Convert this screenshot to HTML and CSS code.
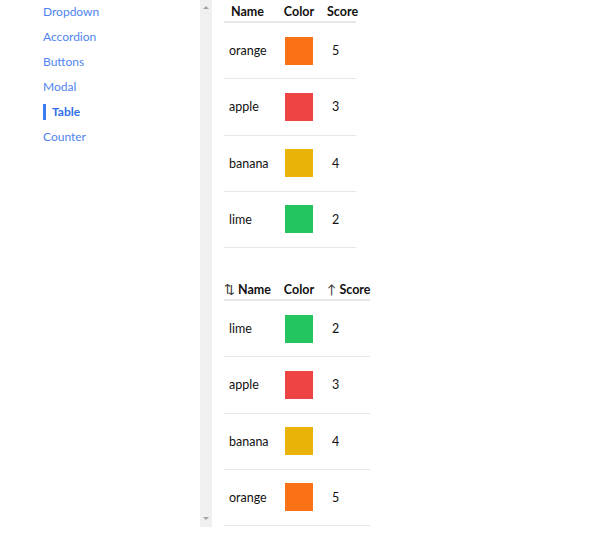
FILE: index.html
```html
<!DOCTYPE html>
<html>
<head>
<meta charset="utf-8">
<link rel="stylesheet" href="styles.css">
</head>
<body>
<div class="app">
  <nav class="sidebar">
    <a class="nav-item">Dropdown</a>
    <a class="nav-item">Accordion</a>
    <a class="nav-item">Buttons</a>
    <a class="nav-item">Modal</a>
    <a class="nav-item active">Table</a>
    <a class="nav-item">Counter</a>
  </nav>
  <div class="scrollbar">
    <span class="arrow up"></span>
    <span class="arrow down"></span>
  </div>
  <main class="content">
    <table class="data first">
      <thead>
        <tr><th class="c1">Name</th><th class="c2">Color</th><th class="c3">Score</th></tr>
      </thead>
      <tbody>
        <tr><td>orange</td><td class="sw"><span class="swatch orange"></span></td><td>5</td></tr>
        <tr><td>apple</td><td class="sw"><span class="swatch red"></span></td><td>3</td></tr>
        <tr><td>banana</td><td class="sw"><span class="swatch yellow"></span></td><td>4</td></tr>
        <tr><td>lime</td><td class="sw"><span class="swatch green"></span></td><td>2</td></tr>
      </tbody>
    </table>
    <table class="data second">
      <thead>
        <tr><th class="c1"><span class="sort">⇅</span> Name</th><th class="c2">Color</th><th class="c3"><span class="sort">↑</span> Score</th></tr>
      </thead>
      <tbody>
        <tr><td>lime</td><td class="sw"><span class="swatch green"></span></td><td>2</td></tr>
        <tr><td>apple</td><td class="sw"><span class="swatch red"></span></td><td>3</td></tr>
        <tr><td>banana</td><td class="sw"><span class="swatch yellow"></span></td><td>4</td></tr>
        <tr><td>orange</td><td class="sw"><span class="swatch orange"></span></td><td>5</td></tr>
      </tbody>
    </table>
  </main>
</div>
</body>
</html>
```
FILE: styles.css
```css
html, body {
  margin: 0;
  padding: 0;
  background: #ffffff;
}
body {
  font-family: Lato, "Noto Sans", sans-serif;
  font-size: 12.5px;
  color: #111111;
}
.app {
  display: flex;
  align-items: flex-start;
}
.sidebar {
  width: 200px;
  flex: none;
  display: flex;
  flex-direction: column;
  padding-left: 43px;
  box-sizing: border-box;
  margin-top: -1px;
}
.nav-item {
  display: block;
  line-height: 25px;
  height: 25px;
  color: #4f84f0;
  font-size: 12px;
}
.nav-item.active {
  color: #2f6fea;
  font-weight: 700;
  display: flex;
  align-items: center;
}
.nav-item.active::before {
  content: "";
  width: 3px;
  height: 16px;
  background: #3b7cf2;
  margin-right: 6px;
}
.scrollbar {
  width: 12px;
  height: 527px;
  flex: none;
  background: #f0f0f0;
  position: relative;
}
.arrow {
  position: absolute;
  left: 3px;
  width: 0;
  height: 0;
  border-left: 3px solid transparent;
  border-right: 3px solid transparent;
}
.arrow.up {
  top: 6px;
  border-bottom: 3px solid #a3a3a3;
}
.arrow.down {
  bottom: 7px;
  border-top: 3px solid #a3a3a3;
}
.content {
  padding-left: 12px;
  display: flex;
  flex-direction: column;
  gap: 30px;
}
.data {
  border-collapse: collapse;
  table-layout: fixed;
}
.data.first { width: 132px; }
.data.second { width: 146px; }
.data th {
  font-weight: 700;
  text-align: center;
  padding: 2px 0 0 0;
  height: 19px;
  line-height: 19px;
  border-bottom: 2px solid #e6e7ea;
  white-space: nowrap;
}
.data th.c1 { width: 47px; }
.data th.c2 { width: 56px; }
.sort {
  font-weight: 400;
  color: #333333;
}
.data td {
  height: 55.25px;
  padding: 0 0 0 5px;
  border-bottom: 1px solid #e6e7ea;
  vertical-align: middle;
  text-align: left;
  white-space: nowrap;
}
.data td.sw {
  padding: 0;
  text-align: center;
}
.swatch {
  display: inline-block;
  width: 28px;
  height: 28px;
  vertical-align: middle;
}
.orange { background: #f97316; }
.red { background: #ef4444; }
.yellow { background: #eab308; }
.green { background: #22c55e; }
```
